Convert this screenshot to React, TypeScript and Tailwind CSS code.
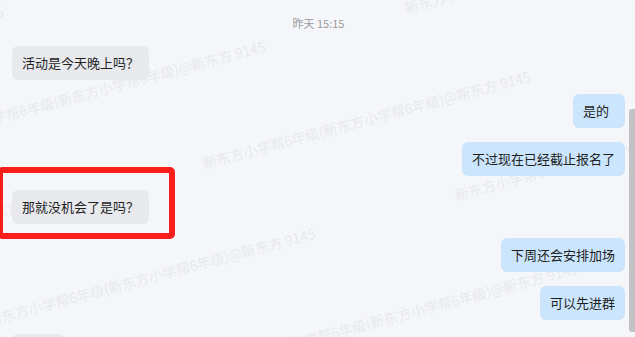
import React from 'react';

type Msg = { id: number; text: string; mine: boolean };

const messages: Msg[] = [
  { id: 1, text: '活动是今天晚上吗？', mine: false },
  { id: 2, text: '是的', mine: true },
  { id: 3, text: '不过现在已经截止报名了', mine: true },
  { id: 4, text: '那就没机会了是吗？', mine: false },
  { id: 5, text: '下周还会安排加场', mine: true },
  { id: 6, text: '可以先进群', mine: true },
  { id: 7, text: '好的', mine: false },
];

// watermark tiles (start point of each line)
const marks = [
  [-324, 98],
  [-274, 285],
  [-62, 133],
  [-12, 320],
  [203, 163],
  [250, 355],
  [455, 195],
  [405, 8],
];

const WATERMARK = '新东方小学帮6年级(新东方小学帮6年级)@新东方 9145';

const App = () => {
  return (
    <div
      className="relative h-[337px] w-[635px] overflow-hidden bg-[#f5f6fa]"
      style={{ fontFamily: '"Noto Sans CJK SC", "Noto Sans", sans-serif' }}
    >
      {/* watermark layer */}
      <div className="pointer-events-none absolute inset-0 z-0">
        {marks.map(([x, y], i) => (
          <span
            key={i}
            className="absolute h-5 origin-left -rotate-[15deg] whitespace-nowrap text-[14px] leading-5 text-[#e7e9ee]"
            style={{ left: x, top: y - 10 }}
          >
            {WATERMARK}
          </span>
        ))}
      </div>

      <div className="relative z-10 flex flex-col pl-3 pr-[10px] pt-[15px]">
        <div className="h-4 text-center text-[11px] leading-4 text-[#9a9a9a]">昨天 15:15</div>
        <div className="mt-[15px] flex flex-col gap-[14px]">
          {messages.map((m) => (
            <div key={m.id} className={m.mine ? 'flex justify-end' : 'flex justify-start'}>
              <div
                className={
                  'h-[34px] min-w-[52px] rounded-[6px] px-[10px] py-2 text-[13px] leading-[18px] text-[#1f1f1f] ' +
                  (m.mine ? 'bg-[#cbe5fc]' : 'bg-[#e8e9ed]')
                }
              >
                {m.text}
              </div>
            </div>
          ))}
        </div>
      </div>

      {/* annotation box */}
      <div className="pointer-events-none absolute left-[-3px] top-[167px] z-20 h-[72px] w-[178px] rounded-[5px] border-[6px] border-[#fa1e1a]" />

      {/* scrollbar */}
      <div className="absolute right-0 top-[109px] z-20 h-[223px] w-[6px] rounded-l-[3px] bg-[#c2c2c4]" />
    </div>
  );
};

export default App;
